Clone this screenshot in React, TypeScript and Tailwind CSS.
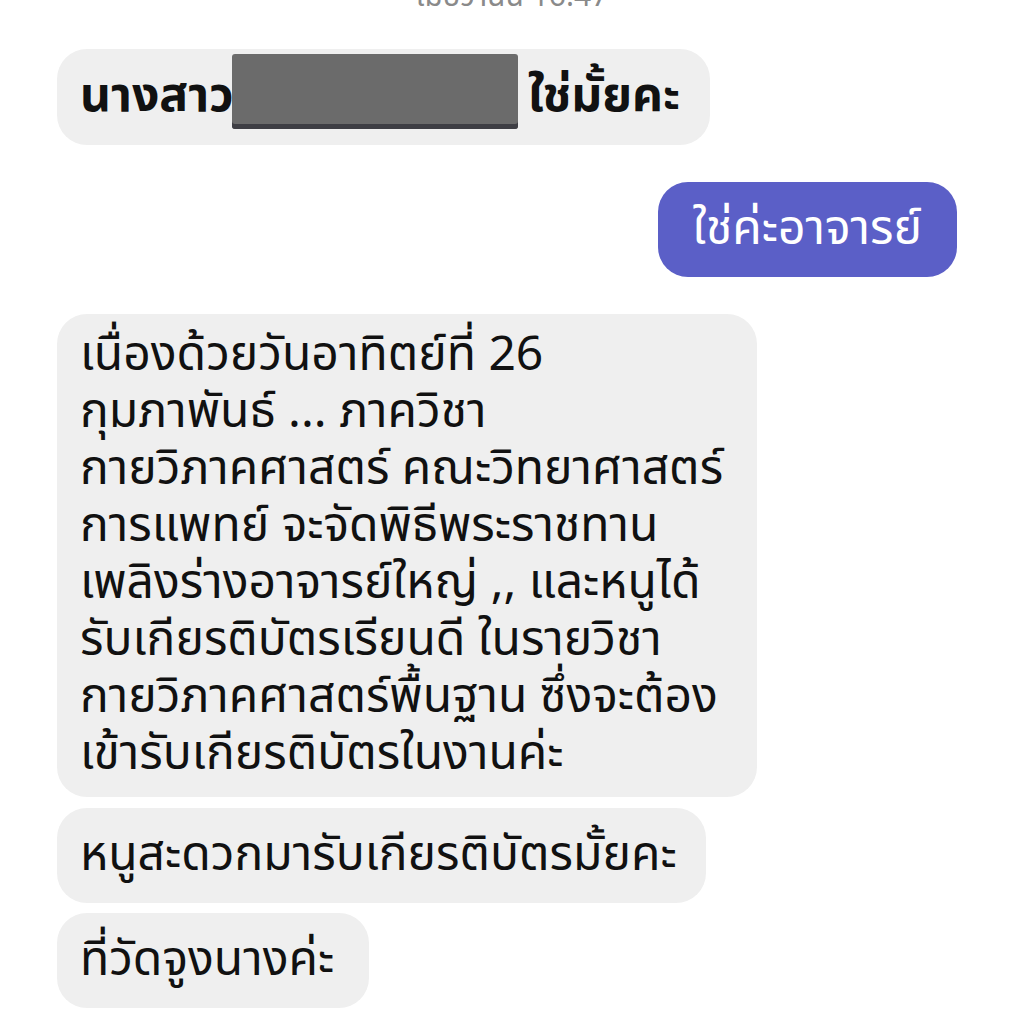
import React from 'react';

const thai = { fontFamily: '"Noto Sans Thai", "Noto Sans", "DejaVu Sans", sans-serif' };

const Incoming: React.FC<{ children: React.ReactNode; multi?: boolean; pr?: string }> = ({ children, multi, pr = 'pr-[23px]' }) => (
    <div className="flex justify-start">
        <div className={`bg-[#efefef] rounded-[30px] pl-[23px] ${pr} ${multi ? 'pt-[13px] pb-[14px]' : 'py-[19px]'} text-[48px] leading-[57px] text-[#111] whitespace-nowrap`}>
            {children}
        </div>
    </div>
);

const App: React.FC = () => {
    return (
        <div className="w-[1024px] h-[1021px] bg-white overflow-hidden" style={thai}>
            <div className="-mt-[20px] h-[34px] text-center text-[30px] leading-[34px] text-[#8a8a8a]">
                เมื่อวานนี้ 16:47
            </div>

            <div className="px-[57px] pt-[35px] flex flex-col">
                <div className="flex justify-start">
                    <div className="bg-[#efefef] rounded-[30px] pl-[23px] pr-[30px] pt-[19px] pb-[20px] text-[48px] leading-[57px] text-[#111] font-bold whitespace-nowrap flex items-center">
                        <span>นางสาว</span>
                        <span className="inline-block w-[286px] h-[75px] -ml-[2px] mr-[10px] -mt-[14px] -mb-[4px] bg-[#6b6b6b] rounded-[3px] shadow-[0_-5px_0_#3e3e44_inset]" />
                        <span>ใช่มั้ยคะ</span>
                    </div>
                </div>

                <div className="flex justify-end mt-[37px] mr-[10px]">
                    <div className="bg-[#5b5fc7] rounded-[30px] px-[35px] py-[19px] text-[48px] leading-[57px] text-white whitespace-nowrap">
                        ใช่ค่ะอาจารย์
                    </div>
                </div>

                <div className="mt-[37px]">
                    <Incoming multi>
                        <div className="w-[654px]">
                            เนื่องด้วยวันอาทิตย์ที่ 26<br />
                            กุมภาพันธ์ ... ภาควิชา<br />
                            กายวิภาคศาสตร์ คณะวิทยาศาสตร์<br />
                            การแพทย์ จะจัดพิธีพระราชทาน<br />
                            เพลิงร่างอาจารย์ใหญ่ ,, และหนูได้<br />
                            รับเกียรติบัตรเรียนดี ในรายวิชา<br />
                            กายวิภาคศาสตร์พื้นฐาน ซึ่งจะต้อง<br />
                            เข้ารับเกียรติบัตรในงานค่ะ
                        </div>
                    </Incoming>
                </div>

                <div className="mt-[11px]">
                    <Incoming pr="pr-[29px]">หนูสะดวกมารับเกียรติบัตรมั้ยคะ</Incoming>
                </div>

                <div className="mt-[10px]">
                    <Incoming pr="pr-[35px]">ที่วัดจูงนางค่ะ</Incoming>
                </div>
            </div>
        </div>
    );
};

export default App;
